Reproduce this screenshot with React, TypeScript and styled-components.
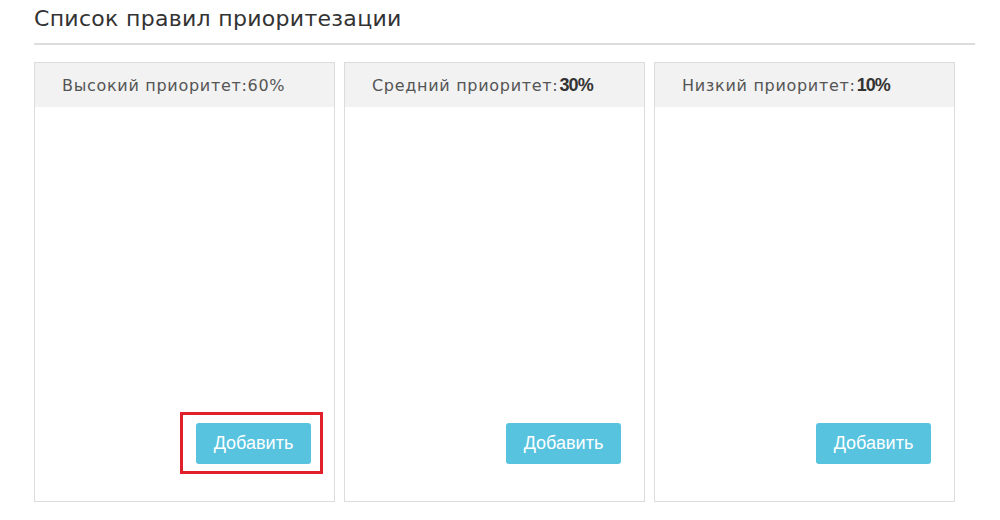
import React from "react";
import styled, { createGlobalStyle } from "styled-components";

const Global = createGlobalStyle`
  html, body { margin: 0; padding: 0; background: #ffffff; }
  body { font-family: "DejaVu Sans", "Liberation Sans", sans-serif; }
`;

const Page = styled.div`
  width: 941px;
  padding: 3px 0 0 34px;
  box-sizing: content-box;
`;

const Title = styled.h2`
  margin: 0;
  font-weight: normal;
  font-size: 22px;
  line-height: 32px;
  color: #333333;
  letter-spacing: 0.3px;
  padding-bottom: 8px;
  border-bottom: 2px solid #dddddd;
`;

const Columns = styled.div`
  display: flex;
  gap: 9px;
  margin-top: 17px;
`;

const Panel = styled.section`
  width: 301px;
  height: 440px;
  box-sizing: border-box;
  border: 1px solid #dcdcdc;
  display: flex;
  flex-direction: column;
`;

const Header = styled.div`
  height: 44px;
  background: #f2f2f2;
  display: flex;
  align-items: center;
  padding-left: 27px;
  font-size: 16px;
  letter-spacing: 0.7px;
  color: #555555;
`;

const Value = styled.span<{ $bold?: boolean }>`
  font-family: ${(p) => (p.$bold ? '"Liberation Sans", Arial, sans-serif' : "inherit")};
  font-weight: ${(p) => (p.$bold ? 700 : 400)};
  font-size: ${(p) => (p.$bold ? "18px" : "16px")};
  color: ${(p) => (p.$bold ? "#333333" : "inherit")};
  letter-spacing: ${(p) => (p.$bold ? "-0.9px" : "0.7px")};
  margin-left: ${(p) => (p.$bold ? "1px" : "0")};
`;

const Body = styled.div`
  flex: 1;
  display: flex;
  align-items: flex-end;
  justify-content: flex-end;
  padding: 0 23px 37px 0;
`;

const AddButton = styled.button<{ $highlight?: boolean }>`
  position: relative;
  width: 115px;
  height: 41px;
  border: none;
  border-radius: 3px;
  background: #58c3df;
  color: #ffffff;
  font-family: "Liberation Sans", Arial, sans-serif;
  font-size: 18px;
  cursor: pointer;
  padding: 0;

  ${(p) =>
    p.$highlight &&
    `
    &::after {
      content: "";
      position: absolute;
      left: -16px;
      right: -12px;
      top: -11px;
      bottom: -10px;
      border: 3px solid #e0212b;
      pointer-events: none;
    }
  `}
`;

const panels = [
  { label: "Высокий приоритет:", value: "60%", bold: false, highlight: true },
  { label: "Средний приоритет:", value: "30%", bold: true, highlight: false },
  { label: "Низкий приоритет:", value: "10%", bold: true, highlight: false },
];

export default function App() {
  return (
    <>
      <Global />
      <Page>
        <Title>Список правил приоритезации</Title>
        <Columns>
          {panels.map((p) => (
            <Panel key={p.label}>
              <Header>
                {p.label}
                <Value $bold={p.bold}>{p.value}</Value>
              </Header>
              <Body>
                <AddButton $highlight={p.highlight}>Добавить</AddButton>
              </Body>
            </Panel>
          ))}
        </Columns>
      </Page>
    </>
  );
}
